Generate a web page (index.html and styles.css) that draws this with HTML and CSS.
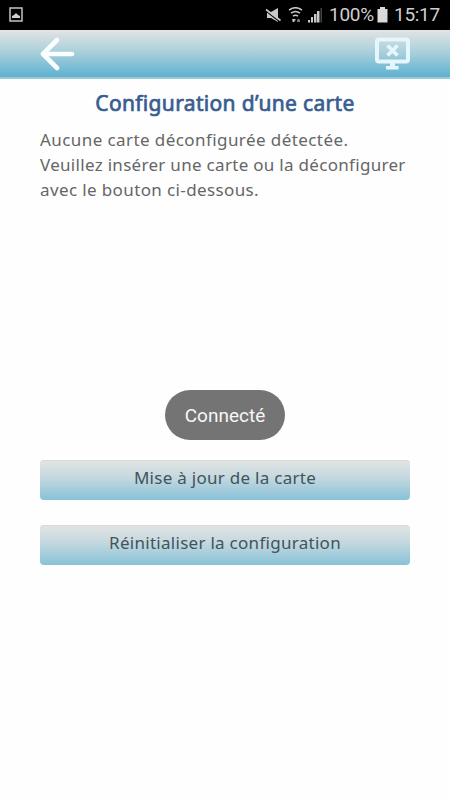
FILE: index.html
```html
<!DOCTYPE html>
<html lang="fr">
<head>
<meta charset="utf-8">
<title>Configuration d’une carte</title>
<link rel="stylesheet" href="styles.css">
</head>
<body>
<div class="status">
  <svg class="shot" width="14" height="15" viewBox="0 0 14 15"><rect x="1" y="1" width="12" height="13" fill="none" stroke="#c4c4c4" stroke-width="1.5"/><path d="M3 11V9l2-1 2-2 2 2 2 1v2z" fill="#d0d0d0"/></svg>
  <div class="tray">
    <svg width="58" height="18" viewBox="0 0 58 18">
      <path d="M2 5h4l7-4v14l-7-4H2z" fill="#c8c8c8"/>
      <path d="M1 4l14 11" stroke="#000" stroke-width="1.200"/><path d="M1 2.500l14.500 11" stroke="#c8c8c8" stroke-width="1.600"/>
      <g fill="none" stroke="#c8c8c8" stroke-width="1.5"><path d="M24 3.200q6.500-5 13 0M26 6.200q4.500-3.500 9 0M28 9.200q2.500-2 5 0"/></g>
      <path d="M27 12h3.500v1.500h-1V15h-2v-1.500z" fill="#c8c8c8"/><path d="M32 15v-2l1.500-1.500L35 13v2z" fill="#777"/>
      <path d="M43 13h2v2.500h-2zM46 10h2v5.500h-2zM49 7h2.500v8.500H49zM52 4h2.500v11.500H52z" fill="#c8c8c8"/><path d="M55.500 1H57v14.500h-1.500z" fill="#444"/>
    </svg>
    <span class="pct">100%</span>
    <svg class="bat" width="11" height="16" viewBox="0 0 11 16"><path d="M3 0h5v2h2.500v13.500H.5V2H3z" fill="#dadada"/></svg>
    <span class="clock">15:17</span>
  </div>
</div>
<header class="bar">
  <svg width="36" height="34" viewBox="0 0 36 34"><path d="M17 3L3 17l14 14M3 17h29" fill="none" stroke="#fafeff" stroke-width="4.600" stroke-linecap="round" stroke-linejoin="round"/></svg>
  <svg width="36" height="34" viewBox="0 0 36 34"><rect x="3" y="2.500" width="31" height="22" rx="2" fill="none" stroke="#e6f6fd" stroke-width="4"/><path d="M16 25h5v4h3.500v3.500h-12.500V29H16z" fill="#e6f6fd"/><path d="M13.500 8.500l10 10M23.500 8.500l-10 10" stroke="#e6f6fd" stroke-width="3.600"/></svg>
</header>
<main>
  <h1>Configuration d’une carte</h1>
  <p><span class="l1">Aucune carte déconfigurée détectée.</span><span class="l2">Veuillez insérer une carte ou la déconfigurer</span><span class="l3">avec le bouton ci-dessous.</span></p>
  <div class="toast">Connecté</div>
  <button class="b1">Mise à jour de la carte</button>
  <button class="b2">Réinitialiser la configuration</button>
</main>
</body>
</html>
```
FILE: styles.css
```css
body { margin: 0; background: #fefefe; font-family: "Noto Sans", sans-serif; color: #666; }
svg { display: block; flex: none; }
.status { height: 30px; box-sizing: border-box; background: #000; display: flex; justify-content: space-between; padding: 0 10px 0 9px; color: #cfcfcf; font: 19px/30px Roboto, sans-serif; }
.shot { margin-top: 7px; }
.tray { display: flex; }
.tray svg { margin-top: 7px; }
.pct { margin-left: 6px; width: 45px; letter-spacing: -0.3px; }
.tray .bat { margin: 7px 6px 0 3px; }
.clock { width: 46px; letter-spacing: -0.3px; }
.bar { height: 49px; box-sizing: border-box; padding: 7px 40px 0 40px; display: flex; justify-content: space-between; background: linear-gradient(#e2e4e4, #a8cfdb 48%, #5eb1d0); border-bottom: 2px solid #9bc9d9; }
main { padding: 0 40px; display: flex; flex-direction: column; }
h1 { margin: 9px 0 0; font-size: 21px; line-height: 30px; font-weight: 400; letter-spacing: 0.34px; -webkit-text-stroke: 0.7px #385d91; color: #385d91; text-align: center; white-space: nowrap; }
p { margin: 9px 0 0; font-size: 17px; line-height: 25px; white-space: nowrap; }
p span { display: block; }
.l1 { letter-spacing: 0.42px; }
.l2 { letter-spacing: 0.3px; }
.l3 { letter-spacing: 0.38px; }
.toast { align-self: center; margin-top: 188px; width: 120px; height: 50px; border-radius: 25px; background: #747474; color: #f7f7f7; text-align: center; font: 19px/51px Roboto, sans-serif; }
button { height: 40px; padding: 0 0 4px; border: 0; border-radius: 4px; background: linear-gradient(#e3e4e4, #c3d8df 45%, #87c2d8); box-shadow: inset 0 1px #d9dbdb; font: 17px/36px "Noto Sans", sans-serif; letter-spacing: 0.28px; color: #43535b; }
.b1 { margin-top: 20px; }
.b2 { margin-top: 25px; }
```
